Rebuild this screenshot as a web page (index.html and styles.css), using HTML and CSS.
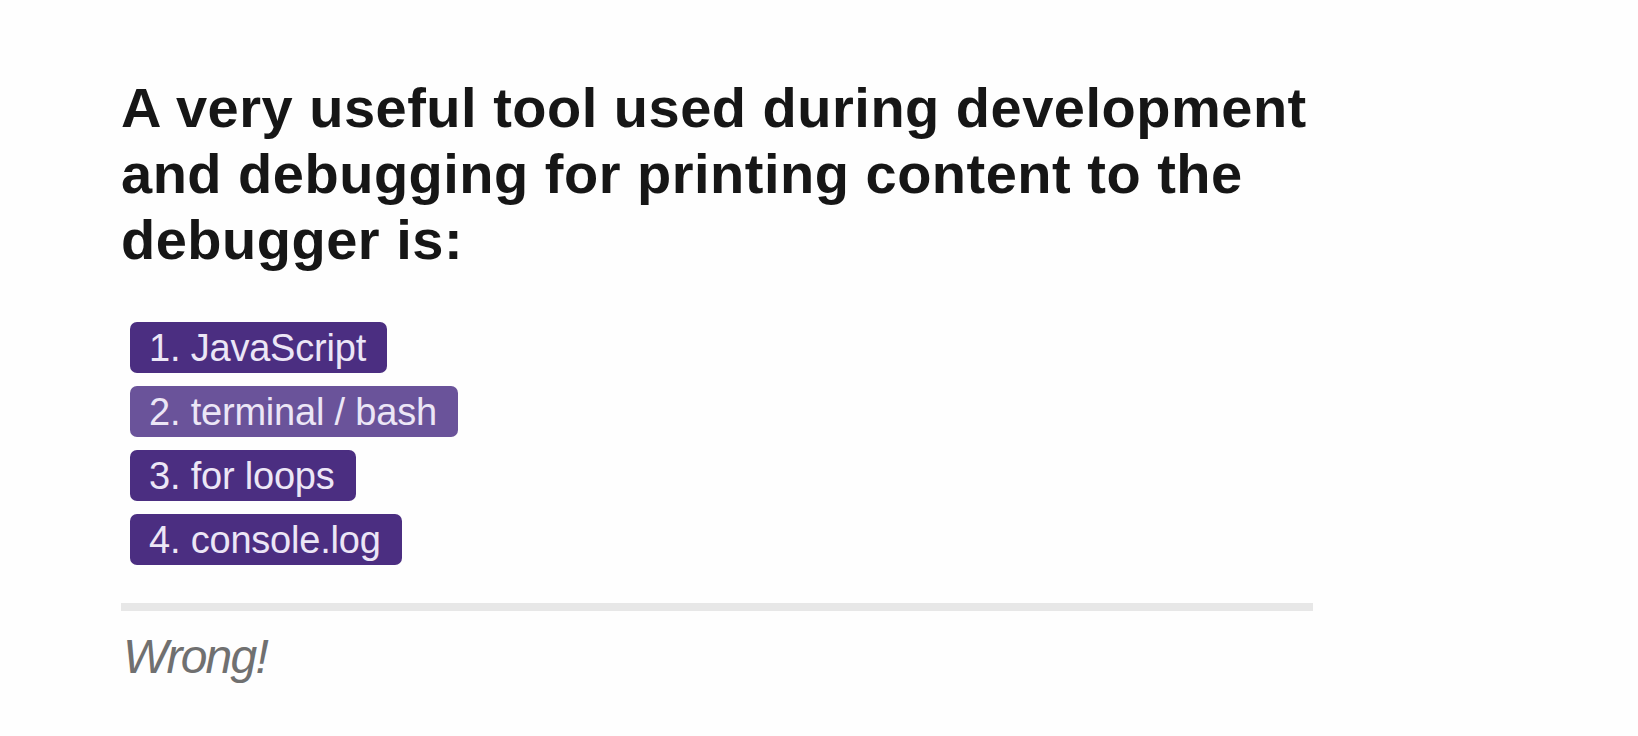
FILE: index.html
```html
<!DOCTYPE html>
<html lang="en">
<head>
<meta charset="utf-8">
<title>Quiz</title>
<link rel="stylesheet" href="styles.css">
</head>
<body>
<main class="quiz">
  <h1 class="question">A very useful tool used during development and debugging for printing content to the debugger is:</h1>
  <div class="answers">
    <button class="answer">1. JavaScript</button>
    <button class="answer answer-hover">2. terminal / bash</button>
    <button class="answer">3. for loops</button>
    <button class="answer">4. console.log</button>
  </div>
  <hr class="divider">
  <p class="result">Wrong!</p>
</main>
</body>
</html>
```

FILE: styles.css
```css
html, body {
  margin: 0;
  padding: 0;
  background: #fefefe;
}

body {
  font-family: "Liberation Sans", Arial, sans-serif;
}

.quiz {
  width: 1192px;
  padding: 75px 0 0 121px;
}

.question {
  width: 1200px;
  margin: 0;
  font-size: 56px;
  line-height: 66px;
  font-weight: bold;
  letter-spacing: 0.5px;
  color: #161616;
}

.answers {
  display: flex;
  flex-direction: column;
  align-items: flex-start;
  gap: 13px;
  margin: 49px 0 0 9px;
}

.answer {
  height: 51px;
  padding: 2px 21px 0 19px;
  border: none;
  border-radius: 7px;
  background: #4b2e81;
  color: #ece6f6;
  font-family: "Liberation Sans", Arial, sans-serif;
  font-size: 38px;
  line-height: 49px;
  letter-spacing: -0.2px;
  cursor: pointer;
}

.answer-hover {
  background: #6a539a;
}

.divider {
  margin: 38px 0 0;
  height: 8px;
  border: none;
  background: #e7e7e7;
}

.result {
  margin: 18px 0 0 2px;
  font-size: 48px;
  line-height: 56px;
  font-style: italic;
  letter-spacing: -1.8px;
  color: #707070;
}
```
